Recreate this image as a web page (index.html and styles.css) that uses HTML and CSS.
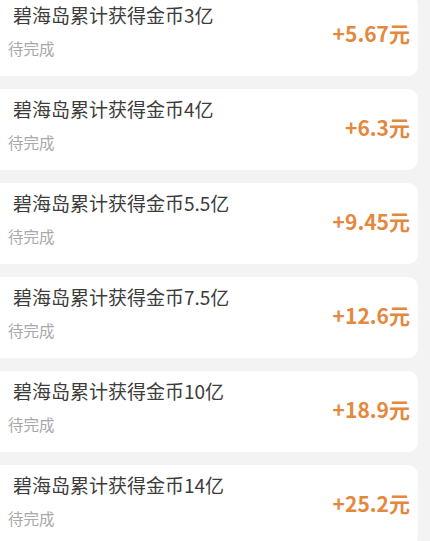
FILE: index.html
```html
<!DOCTYPE html>
<html lang="zh-CN">
<head>
    <meta charset="UTF-8">
    <title>任务奖励</title>
    <link rel="stylesheet" href="styles.css">
</head>
<body>
    <div class="task-list">
        <div class="task-card">
            <div class="task-info">
                <div class="task-title">碧海岛累计获得金币3亿</div>
                <div class="task-status">待完成</div>
            </div>
            <div class="task-reward">+5.67元</div>
        </div>
        <div class="task-card">
            <div class="task-info">
                <div class="task-title">碧海岛累计获得金币4亿</div>
                <div class="task-status">待完成</div>
            </div>
            <div class="task-reward">+6.3元</div>
        </div>
        <div class="task-card">
            <div class="task-info">
                <div class="task-title">碧海岛累计获得金币5.5亿</div>
                <div class="task-status">待完成</div>
            </div>
            <div class="task-reward">+9.45元</div>
        </div>
        <div class="task-card">
            <div class="task-info">
                <div class="task-title">碧海岛累计获得金币7.5亿</div>
                <div class="task-status">待完成</div>
            </div>
            <div class="task-reward">+12.6元</div>
        </div>
        <div class="task-card">
            <div class="task-info">
                <div class="task-title">碧海岛累计获得金币10亿</div>
                <div class="task-status">待完成</div>
            </div>
            <div class="task-reward">+18.9元</div>
        </div>
        <div class="task-card">
            <div class="task-info">
                <div class="task-title">碧海岛累计获得金币14亿</div>
                <div class="task-status">待完成</div>
            </div>
            <div class="task-reward">+25.2元</div>
        </div>
    </div>
</body>
</html>
```

FILE: styles.css
```css
body {
    margin: 0;
    background-color: #f3f3f3;
    font-family: "Noto Sans CJK SC", "Noto Sans", sans-serif;
    overflow: hidden;
}

.task-list {
    display: flex;
    flex-direction: column;
    gap: 13px;
    margin: -5px 12px 0 -12px;
}

.task-card {
    height: 81px;
    box-sizing: border-box;
    background-color: #ffffff;
    border-radius: 10px;
    display: flex;
    align-items: center;
    justify-content: space-between;
    padding: 0 8px 0 20px;
}

.task-info {
    align-self: flex-start;
    padding-top: 8px;
}

.task-title {
    font-size: 19px;
    line-height: 24px;
    color: #3c3c3c;
    margin-left: 5px;
}

.task-status {
    font-size: 15.5px;
    line-height: 20px;
    color: #a9a9a9;
    margin-top: 11px;
}

.task-reward {
    font-size: 21px;
    font-weight: bold;
    color: #e4883e;
    padding-bottom: 6px;
}
```
